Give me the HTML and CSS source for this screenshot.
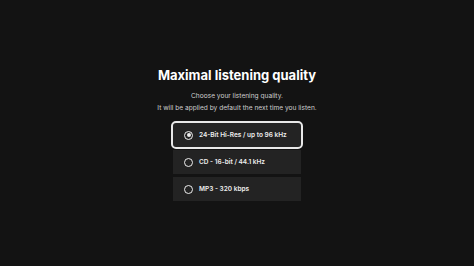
FILE: index.html
```html
<!DOCTYPE html>
<html lang="en">
<head>
    <meta charset="UTF-8">
    <meta name="viewport" content="width=device-width, initial-scale=1.0">
    <title>Listening quality</title>
    <link rel="stylesheet" href="styles.css">
</head>
<body>

<div class="quality">
    <h1 class="title">Maximal listening quality</h1>
    <p class="subtitle">Choose your listening quality.<br>It will be applied by default the next time you listen.</p>
    <div class="options">
        <!-- selected option gets the white outline -->
        <label class="option selected">
            <span class="radio"></span>
            <span class="label">24-Bit Hi-Res / up to 96 kHz</span>
        </label>
        <label class="option">
            <span class="radio"></span>
            <span class="label">CD - 16-bit / 44.1 kHz</span>
        </label>
        <label class="option">
            <span class="radio"></span>
            <span class="label">MP3 - 320 kbps</span>
        </label>
    </div>
</div>

</body>
</html>
```

FILE: styles.css
```css
/* Quality picker */
body {
    margin: 0;
    height: 266px;
    display: flex;
    justify-content: center;
    font-family: "Inter", "Open Sans", sans-serif;
    background-color: #131313;
    color: #fff;
}
.quality {
    display: flex;
    flex-direction: column;
    align-items: center;
    padding-top: 66px;
}
.title {
    margin: 0;
    font-size: 13px;
    font-weight: 700;
    line-height: 18px;
}
.subtitle {
    margin: 6px 0 0;
    font-size: 6.6px;
    line-height: 12px;
    color: #cfcfcf;
    text-align: center;
}
.options {
    display: flex;
    flex-direction: column;
    gap: 3px;
    margin-top: 9px;
}
.option {
    width: 128px;
    height: 24px;
    box-sizing: border-box;
    display: flex;
    align-items: center;
    padding-left: 11px;
    background-color: #232323;
    cursor: pointer;
}
.option.selected {
    outline: 2px solid #e8e8e8;
    border-radius: 3px;
}
.radio {
    width: 7px;
    height: 7px;
    border: 1.5px solid #eee;
    border-radius: 50%;
    position: relative;
}
.selected .radio::after {
    content: "";
    position: absolute;
    left: 1.5px;
    top: 1.5px;
    width: 4px;
    height: 4px;
    border-radius: 50%;
    background-color: #eee;
}
.label {
    margin-left: 6px;
    font-size: 6.5px;
    font-weight: 600;
    color: #eee;
}
```
